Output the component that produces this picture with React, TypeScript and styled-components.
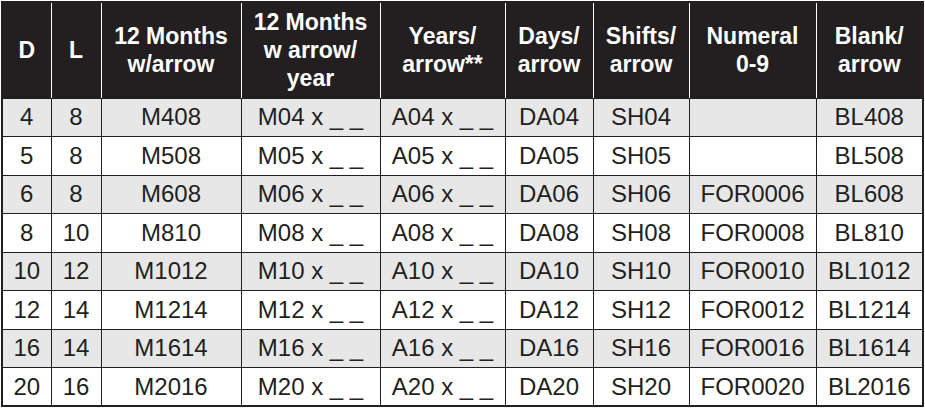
import styled, { createGlobalStyle } from 'styled-components';

const GlobalStyle = createGlobalStyle`
  html, body {
    margin: 0;
    padding: 0;
    background: #ffffff;
  }
  body {
    font-family: "Liberation Sans", Arial, sans-serif;
  }
`;

const Page = styled.div`
  padding: 1px 0 0 1px;
`;

const Table = styled.table`
  border-collapse: collapse;
  table-layout: fixed;
  width: 921px;
  border: 2px solid #231f20;
  color: #231f20;
`;

const HeadRow = styled.tr`
  height: 96px;
  background: #231f20;
`;

const HeadCell = styled.th`
  padding: 0 2px;
  font-size: 23px;
  font-weight: 700;
  line-height: 28px;
  color: #ffffff;
  text-align: center;
  vertical-align: middle;
  border-left: 1px solid #ffffff;
  border-right: 1px solid #ffffff;
  border-bottom: 1px solid #231f20;
`;

const Row = styled.tr<{ $shaded: boolean }>`
  height: 38.5px;
  background: ${(p) => (p.$shaded ? '#e7e7e8' : '#ffffff')};
`;

const Cell = styled.td`
  padding: 0;
  font-size: 24px;
  line-height: 26px;
  text-align: center;
  vertical-align: middle;
  white-space: nowrap;
  border: 1px solid #231f20;
`;

const columns = [
  { width: 49, title: ['D'] },
  { width: 50, title: ['L'] },
  { width: 140, title: ['12 Months', 'w/arrow'] },
  { width: 139, title: ['12 Months', 'w arrow/', 'year'] },
  { width: 125, title: ['Years/', 'arrow**'] },
  { width: 88, title: ['Days/', 'arrow'] },
  { width: 96, title: ['Shifts/', 'arrow'] },
  { width: 127, title: ['Numeral', '0-9'] },
  { width: 107, title: ['Blank/', 'arrow'] },
];

const sizes: [number, number, boolean][] = [
  [4, 8, false],
  [5, 8, false],
  [6, 8, true],
  [8, 10, true],
  [10, 12, true],
  [12, 14, true],
  [16, 14, true],
  [20, 16, true],
];

const pad = (n: number) => String(n).padStart(2, '0');

function buildRow([d, l, numeral]: [number, number, boolean]): string[] {
  const code = `${d}${pad(l)}`;
  return [
    String(d),
    String(l),
    `M${code}`,
    `M${pad(d)} x _ _`,
    `A${pad(d)} x _ _`,
    `DA${pad(d)}`,
    `SH${pad(d)}`,
    numeral ? `FOR00${pad(d)}` : '',
    `BL${code}`,
  ];
}

export default function App() {
  return (
    <Page>
      <GlobalStyle />
      <Table>
        <colgroup>
          {columns.map((c, i) => (
            <col key={i} style={{ width: c.width }} />
          ))}
        </colgroup>
        <thead>
          <HeadRow>
            {columns.map((c, i) => (
              <HeadCell key={i}>
                {c.title.map((line, j) => (
                  <div key={j}>{line}</div>
                ))}
              </HeadCell>
            ))}
          </HeadRow>
        </thead>
        <tbody>
          {sizes.map((s, i) => (
            <Row key={i} $shaded={i % 2 === 0}>
              {buildRow(s).map((v, j) => (
                <Cell key={j}>{v}</Cell>
              ))}
            </Row>
          ))}
        </tbody>
      </Table>
    </Page>
  );
}
